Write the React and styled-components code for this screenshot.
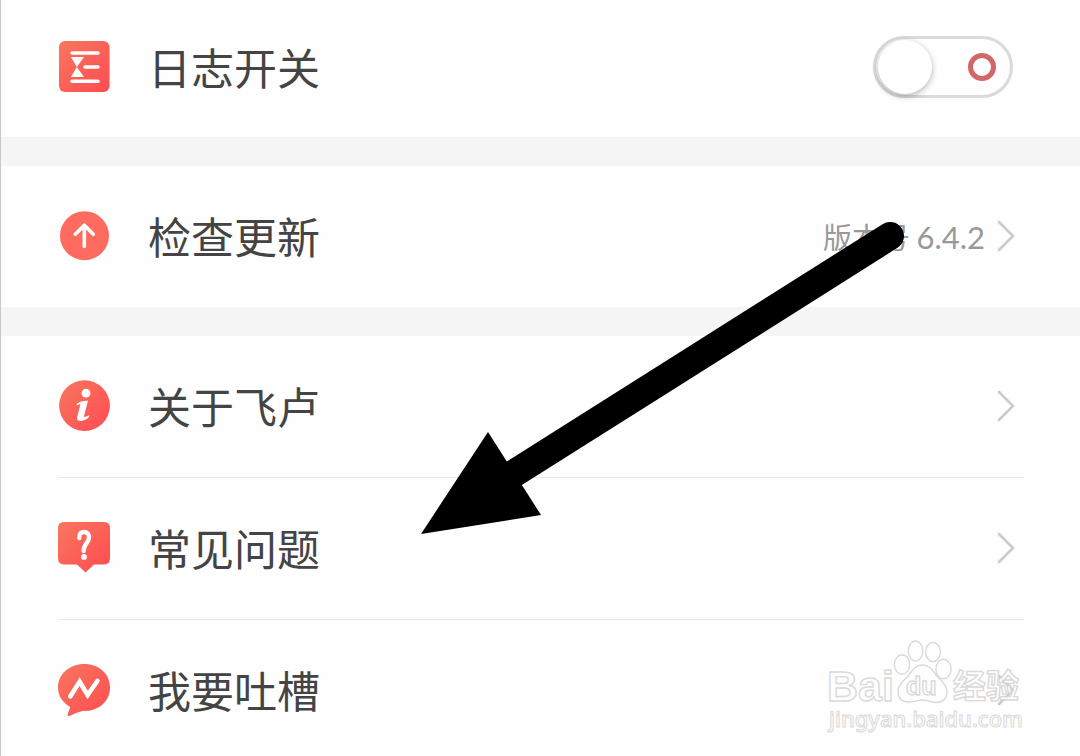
import styled, { createGlobalStyle } from 'styled-components';

function Gradient({ id }) {
  return (
    <defs>
      <linearGradient id={id} x1="0" y1="0" x2="1" y2="1">
        <stop offset="0" stopColor="#f9765f" />
        <stop offset="1" stopColor="#ff4c50" />
      </linearGradient>
    </defs>
  );
}

function LogIcon() {
  return (
    <Icon viewBox="0 0 52 52" aria-hidden="true">
      <Gradient id="log" />
      <rect x="1" y="0" width="50.5" height="51" rx="6" fill="url(#log)" />
      <path d="M14 12H40M27 26H40M14 40.3H40" stroke="#fff" strokeWidth="3.4" strokeLinecap="round" />
      <path d="M13 16H26L18.8 26L26 36H13L18.8 26Z" fill="#fff" />
    </Icon>
  );
}

function UpdateIcon() {
  return (
    <Icon viewBox="0 0 52 52" aria-hidden="true">
      <circle cx="26.5" cy="25.7" r="24.5" fill="#ff6b5f" />
      <path d="M26.3 36.5V15.5M17.3 24.3L26.3 15.2L35.3 24.3" fill="none" stroke="#fff" strokeWidth="3.6" strokeLinecap="round" strokeLinejoin="round" />
    </Icon>
  );
}

function AboutIcon() {
  return (
    <Icon viewBox="0 0 52 52" aria-hidden="true">
      <Gradient id="about" />
      <circle cx="26.5" cy="25.6" r="25.4" fill="url(#about)" />
      <circle cx="28" cy="13.2" r="4.4" fill="#fff" />
      <path d="M19 23.6C22.5 21.2 26 20.4 30 20.8L25.8 37C28 36.8 29.8 36 31.4 35.2L30.6 37.4C27.5 40.2 23.5 41.6 20 40.6C18.6 39.6 19 37.6 19.4 36L22.4 24.6C21.2 24.5 20 24.8 18.6 25.2Z" fill="#fff" />
    </Icon>
  );
}

function QuestionIcon() {
  return (
    <Icon viewBox="0 0 52 52" aria-hidden="true">
      <Gradient id="question" />
      <path d="M6 0H46Q52 0 52 6V36Q52 42.5 46 42.5H36L27.5 50.5L19 42.5H6Q0 42.5 0 36V6Q0 0 6 0Z" fill="url(#question)" />
      <path d="M21.2 16C21 11.6 23.4 10 26 10C29 10 31.2 12.2 31 15.6C30.8 20.8 25.4 22.4 25.6 29" fill="none" stroke="#fff" strokeWidth="4.4" strokeLinecap="round" />
      <circle cx="26" cy="35" r="2.9" fill="#fff" />
    </Icon>
  );
}

function ChatIcon() {
  return (
    <Icon viewBox="0 0 52 52" aria-hidden="true">
      <Gradient id="chat" />
      <path d="M26.3 0C41 0 52 10 52 23.4C52 37 41 46.6 27.5 46.8C23 47 20.5 48 17 49.6L11.4 52Q9 52.6 9.8 50L12.2 43C4.5 38.6 0 32 0 23.6C0 10 11.6 0 26.3 0Z" fill="url(#chat)" />
      <path d="M12.2 32.4L21.6 17.6L29.6 31L39.4 17" fill="none" stroke="#fff" strokeWidth="4.6" strokeLinecap="round" strokeLinejoin="miter" />
    </Icon>
  );
}

function Arrow() {
  return (
    <Chevron viewBox="0 0 18 32" aria-hidden="true">
      <path d="M2 2L16 16L2 30" fill="none" stroke="#cbcbcb" strokeWidth="2.6" strokeLinecap="round" />
    </Chevron>
  );
}

function LinkRow({ icon, label, divided, children }) {
  return (
    <Item $divided={divided}>
      <RowLink href="#">
        {icon}
        <Label>{label}</Label>
        {children}
        <Arrow />
      </RowLink>
    </Item>
  );
}

function BaiduMark() {
  return (
    <Watermark viewBox="0 0 204 100" role="img" aria-label="Baidu 经验">
      <g fill="#fff" stroke="#d4d4d4" strokeWidth="1.4">
        <ellipse cx="80" cy="28.500" rx="7.6" ry="9.8" />
        <ellipse cx="93.500" cy="15" rx="7.2" ry="10" />
        <ellipse cx="111" cy="16" rx="7.4" ry="9.6" />
        <ellipse cx="121.500" cy="33" rx="7.6" ry="9.8" />
        <path d="M100.500 29C108 29 111 35 115 40C120 46 125 49 125 56C125 63 120 66.500 114 66.500C109 66.500 106 64 101 64C95 64 92 66 87 66C80 66 76 62 76 55C76 48 82 45 86 40C90 35 93 29 100.500 29Z" />
        <BoldText x="5" y="65" $size={43}>Bai</BoldText>
        <BoldText x="84" y="59" $size={25}>du</BoldText>
        <BoldText x="131" y="62" $size={33}>经验</BoldText>
        <SiteText x="7" y="91">jingyan.baidu.com</SiteText>
      </g>
    </Watermark>
  );
}

export default function App() {
  return (
    <>
      <GlobalStyle />
      <Page>
        <Group>
          <SwitchRow>
            <LogIcon />
            <Label as="label" htmlFor="log-switch">日志开关</Label>
            <Switch id="log-switch" type="checkbox" role="switch" />
          </SwitchRow>
        </Group>
        <Group>
          <LinkRow icon={<UpdateIcon />} label="检查更新">
            <Version>版本号 <Digits>6.4.2</Digits></Version>
          </LinkRow>
        </Group>
        <Group>
          <LinkRow icon={<AboutIcon />} label="关于飞卢" divided />
          <LinkRow icon={<QuestionIcon />} label="常见问题" divided />
          <LinkRow icon={<ChatIcon />} label="我要吐槽" />
        </Group>
        <Pointer viewBox="0 0 490 320" aria-hidden="true">
          <path d="M470 16L90 256" stroke="#000" strokeWidth="28" strokeLinecap="round" />
          <path d="M68 212L121 295L1 314Z" />
        </Pointer>
        <BaiduMark />
      </Page>
    </>
  );
}

const GlobalStyle = createGlobalStyle`
  *, *::before, *::after {
    box-sizing: border-box;
  }
  html, body, #root {
    height: 100%;
  }
  body {
    margin: 0;
    background: #fefefe;
    font-family: "Noto Sans CJK SC", sans-serif;
    color: #444;
  }
`;

const Page = styled.main`
  position: relative;
  display: flex;
  flex-direction: column;
  gap: 29px;
  min-height: 100%;
  background: #f5f5f5;
  border-left: 1px solid #c8c8c8;
  overflow: hidden;
`;

const Group = styled.ul`
  margin: 0;
  padding: 0 56px 0 57px;
  list-style: none;
  background: #fefefe;
  &:last-of-type {
    flex: 1;
  }
`;

const Item = styled.li`
  border-bottom: ${(p) => (p.$divided ? '1px solid #e8e8e8' : '0')};
`;

const RowLink = styled.a`
  display: flex;
  align-items: center;
  height: 141px;
  padding: 0 9px 2px 0;
  color: inherit;
  text-decoration: none;
`;

const SwitchRow = styled.li`
  display: flex;
  align-items: center;
  height: 137px;
  padding: 0 11px 3px 0;
`;

const Icon = styled.svg`
  flex: none;
  width: 52px;
  height: 52px;
  overflow: visible;
`;

const Label = styled.span`
  flex: 1;
  padding: 0 0 2px 38px;
  font-size: 43px;
  line-height: 60px;
`;

const Version = styled.span`
  padding: 2px 12px 0 0;
  font-size: 29px;
  line-height: 40px;
  color: #999;
`;

const Digits = styled.span`
  font-family: Lato, sans-serif;
  font-size: 31px;
`;

const Chevron = styled.svg`
  flex: none;
  width: 18px;
  height: 32px;
`;

const Switch = styled.input`
  appearance: none;
  display: flex;
  align-items: center;
  justify-content: space-between;
  width: 140px;
  height: 62px;
  margin: 0;
  padding: 0 14px 0 2px;
  border: 3px solid #dadada;
  border-radius: 31px;
  background: #fefefe;
  &::before {
    content: "";
    width: 54px;
    height: 54px;
    border-radius: 50%;
    background: #fff;
    box-shadow: 0 2px 6px rgba(0, 0, 0, 0.3);
  }
  &::after {
    content: "";
    width: 28px;
    height: 28px;
    border: 5px solid #d3666a;
    border-radius: 50%;
  }
  &:checked {
    flex-direction: row-reverse;
  }
`;

const Pointer = styled.svg`
  position: absolute;
  top: 220px;
  left: 419px;
  width: 490px;
  height: 320px;
  pointer-events: none;
`;

const Watermark = styled.svg`
  position: absolute;
  right: 54px;
  bottom: 25px;
  width: 204px;
  height: 100px;
  opacity: 0.85;
  pointer-events: none;
`;

const BoldText = styled.text`
  font-family: "Liberation Sans", "Noto Sans CJK SC", sans-serif;
  font-size: ${(p) => p.$size}px;
  font-weight: 700;
`;

const SiteText = styled.text`
  font-family: "Noto Sans", sans-serif;
  font-size: 22px;
  font-weight: 500;
  stroke-width: 1px;
`;
